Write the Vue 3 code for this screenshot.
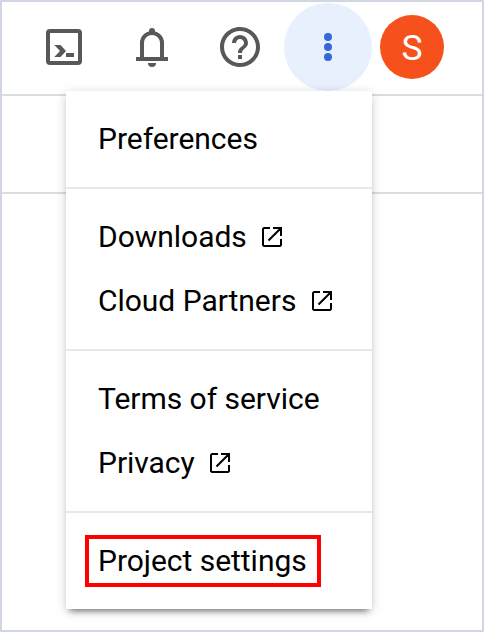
<script setup>
const sections = [
  [{ label: 'Preferences' }],
  [{ label: 'Downloads', external: true }, { label: 'Cloud Partners', external: true }],
  [{ label: 'Terms of service' }, { label: 'Privacy', external: true }],
  [{ label: 'Project settings', marked: true }],
]
</script>

<template>
  <div class="frame">
    <header class="topbar">
      <button class="tool" aria-label="Cloud Shell">
        <svg width="48" height="48" viewBox="0 0 48 48">
          <path d="M10 6h28a4 4 0 0 1 4 4v28a4 4 0 0 1-4 4H10a4 4 0 0 1-4-4V10a4 4 0 0 1 4-4zM10 10v28h28V10z" fill="currentColor" fill-rule="evenodd" />
          <path d="M14.300 22h6.200l5.500 6-5.500 6h-6.200l5.700-6zM26 30h8v4h-8z" fill="currentColor" />
        </svg>
      </button>
      <button class="tool" aria-label="Notifications">
        <svg width="48" height="48" viewBox="0 0 48 48">
          <path d="M14 36V20a10 10 0 0 1 20 0v16" fill="none" stroke="currentColor" stroke-width="4" />
          <path d="M8 34h32v4H8zM20 40h8a4 4 0 0 1-8 0zM21 10V8a3 3 0 0 1 6 0v2z" fill="currentColor" />
        </svg>
      </button>
      <button class="tool" aria-label="Help">
        <svg width="48" height="48" viewBox="0 0 24 24">
          <path d="M11 18h2v-2h-2v2zm1-16C6.480 2 2 6.480 2 12s4.480 10 10 10 10-4.480 10-10S17.520 2 12 2zm0 18c-4.410 0-8-3.590-8-8s3.590-8 8-8 8 3.590 8 8-3.590 8-8 8zm0-14c-2.210 0-4 1.790-4 4h2c0-1.100.900-2 2-2s2 .900 2 2c0 2-3 1.750-3 5h2c0-2.250 3-2.500 3-5 0-2.210-1.790-4-4-4z" fill="currentColor" />
        </svg>
      </button>
      <button class="tool active" aria-label="More">
        <svg width="48" height="48" viewBox="0 0 48 48" fill="currentColor">
          <circle cx="24" cy="14" r="4" /><circle cx="24" cy="24" r="4" /><circle cx="24" cy="34" r="4" />
        </svg>
      </button>
      <div class="avatar">S</div>
    </header>
    <div class="subbar"></div>
    <nav class="menu">
      <div v-for="(section, i) in sections" :key="i" class="section">
        <a v-for="item in section" :key="item.label" class="item">
          <span class="label" :class="{ marked: item.marked }">{{ item.label }}</span>
          <svg v-if="item.external" class="external" width="20" height="20" viewBox="0 0 20 20" fill="none" stroke="currentColor" stroke-width="2">
            <path d="M8 1H2L1 2V18L2 19H18L19 18V12M11 1H19V9M19 1L6.500 13.500" />
          </svg>
        </a>
      </div>
    </nav>
  </div>
</template>

<style>
body { margin: 0; background: #fff; }
</style>

<style scoped>
.frame {
  position: relative;
  box-sizing: border-box;
  width: 484px;
  height: 632px;
  border: 2px solid #d0d6e3;
  background: #fff;
  overflow: hidden;
  font-family: Roboto, sans-serif;
}
.topbar {
  box-sizing: border-box;
  display: flex;
  align-items: center;
  height: 94px;
  padding: 0 0 2px 18px;
  border-bottom: 2px solid #dadce3;
}
.tool {
  display: grid;
  place-items: center;
  flex: none;
  width: 88px;
  height: 88px;
  padding: 0;
  border: 0;
  border-radius: 50%;
  background: none;
  color: #575858;
}
.active { background: #e8effd; color: #3469dc; }
.avatar {
  width: 64px;
  height: 64px;
  margin-left: 8px;
  border-radius: 50%;
  background: #f6511d;
  color: #fff;
  font-size: 35.500px;
  line-height: 66px;
  text-align: center;
}
.subbar { height: 96px; border-bottom: 2px solid #dadce0; }
.menu {
  position: absolute;
  left: 64px;
  top: 89px;
  width: 306px;
  background: #fff;
  box-shadow: 0 6px 6px -4px rgba(0, 0, 0, .45), 0 2px 10px rgba(0, 0, 0, .18);
}
.section { padding: 16px 0; }
.section + .section { border-top: 2px solid #e8e8e8; }
.item {
  display: flex;
  align-items: center;
  height: 64px;
  padding-left: 32px;
  color: #000;
  font-size: 30px;
  line-height: 44px;
  letter-spacing: -.03px;
  white-space: nowrap;
}
.external { margin-left: 15.400px; }
.marked {
  margin-left: -13px;
  padding: 0 10.500px 0 9px;
  border: 4px solid #f00;
}
</style>
